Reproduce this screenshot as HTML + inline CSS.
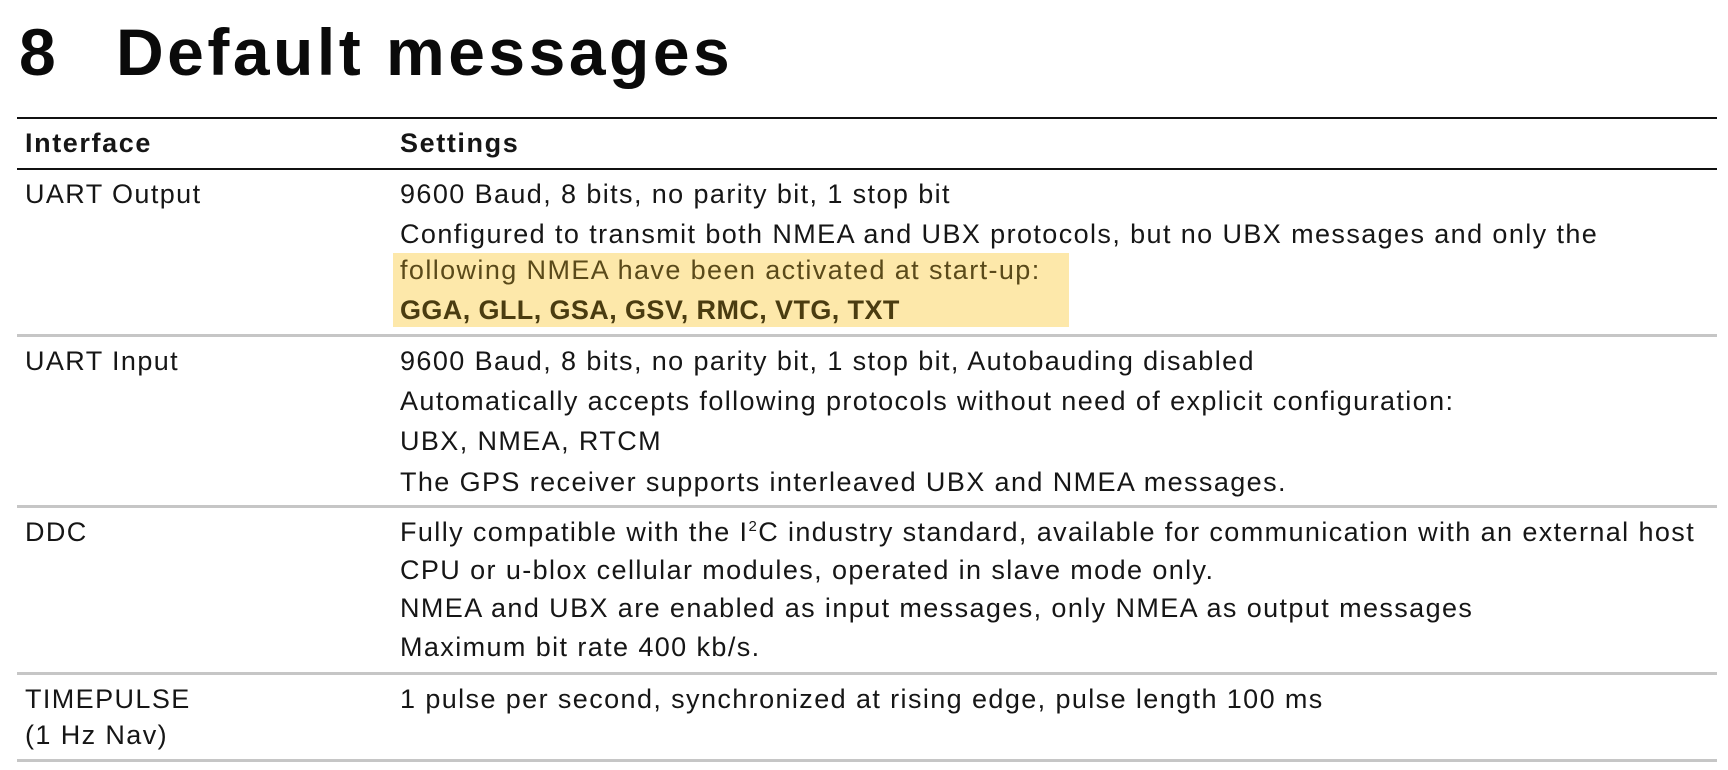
<!DOCTYPE html>
<html><head><meta charset="utf-8"><style>
body{margin:0;width:1728px;height:770px;background:#fff;position:relative;overflow:hidden;font-family:"Liberation Sans",sans-serif;color:#161616}
.t{position:absolute;font-size:27px;line-height:30px;white-space:nowrap;letter-spacing:1.4px}
.b{font-weight:bold;letter-spacing:0.4px}
.hd{letter-spacing:1.6px}
.h{position:absolute;left:17px;width:1700px}
</style></head><body>
<div style="position:absolute;left:19px;top:12px;font-size:66px;font-weight:bold;line-height:80px;color:#0a0a0a">8</div>
<div style="position:absolute;left:116px;top:12px;font-size:66px;font-weight:bold;line-height:80px;color:#0a0a0a;letter-spacing:3.5px">Default messages</div>
<div class="h" style="top:117px;height:2px;background:#111"></div>
<div class="t b hd" style="left:25px;top:128px">Interface</div>
<div class="t b hd" style="left:400px;top:128px">Settings</div>
<div class="h" style="top:168px;height:2px;background:#111"></div>
<div style="position:absolute;left:393px;top:253px;width:676px;height:74px;background:#fde8aa"></div>
<div class="t" style="left:25px;top:179px">UART Output</div>
<div class="t" style="left:400px;top:179px">9600 Baud, 8 bits, no parity bit, 1 stop bit</div>
<div class="t" style="left:400px;top:219px">Configured to transmit both NMEA and UBX protocols, but no UBX messages and only the</div>
<div class="t" style="left:400px;top:255px;color:#5a4a1a">following NMEA have been activated at start-up:</div>
<div class="t b" style="left:400px;top:295px;color:#4a3c10">GGA, GLL, GSA, GSV, RMC, VTG, TXT</div>
<div class="h" style="top:334px;height:3px;background:#c6c6c6"></div>
<div class="t" style="left:25px;top:346px">UART Input</div>
<div class="t" style="left:400px;top:346px">9600 Baud, 8 bits, no parity bit, 1 stop bit, Autobauding disabled</div>
<div class="t" style="left:400px;top:386px">Automatically accepts following protocols without need of explicit configuration:</div>
<div class="t" style="left:400px;top:426px">UBX, NMEA, RTCM</div>
<div class="t" style="left:400px;top:467px">The GPS receiver supports interleaved UBX and NMEA messages.</div>
<div class="h" style="top:505px;height:3px;background:#c6c6c6"></div>
<div class="t" style="left:25px;top:517px">DDC</div>
<div class="t" style="left:400px;top:517px">Fully compatible with the I<sup style="font-size:15px;line-height:0">2</sup>C industry standard, available for communication with an external host</div>
<div class="t" style="left:400px;top:555px">CPU or u-blox cellular modules, operated in slave mode only.</div>
<div class="t" style="left:400px;top:593px">NMEA and UBX are enabled as input messages, only NMEA as output messages</div>
<div class="t" style="left:400px;top:632px">Maximum bit rate 400 kb/s.</div>
<div class="h" style="top:672px;height:3px;background:#c6c6c6"></div>
<div class="t" style="left:25px;top:684px">TIMEPULSE</div>
<div class="t" style="left:25px;top:720px">(1 Hz Nav)</div>
<div class="t" style="left:400px;top:684px">1 pulse per second, synchronized at rising edge, pulse length 100 ms</div>
<div class="h" style="top:759px;height:3px;background:#c6c6c6"></div>
</body></html>
